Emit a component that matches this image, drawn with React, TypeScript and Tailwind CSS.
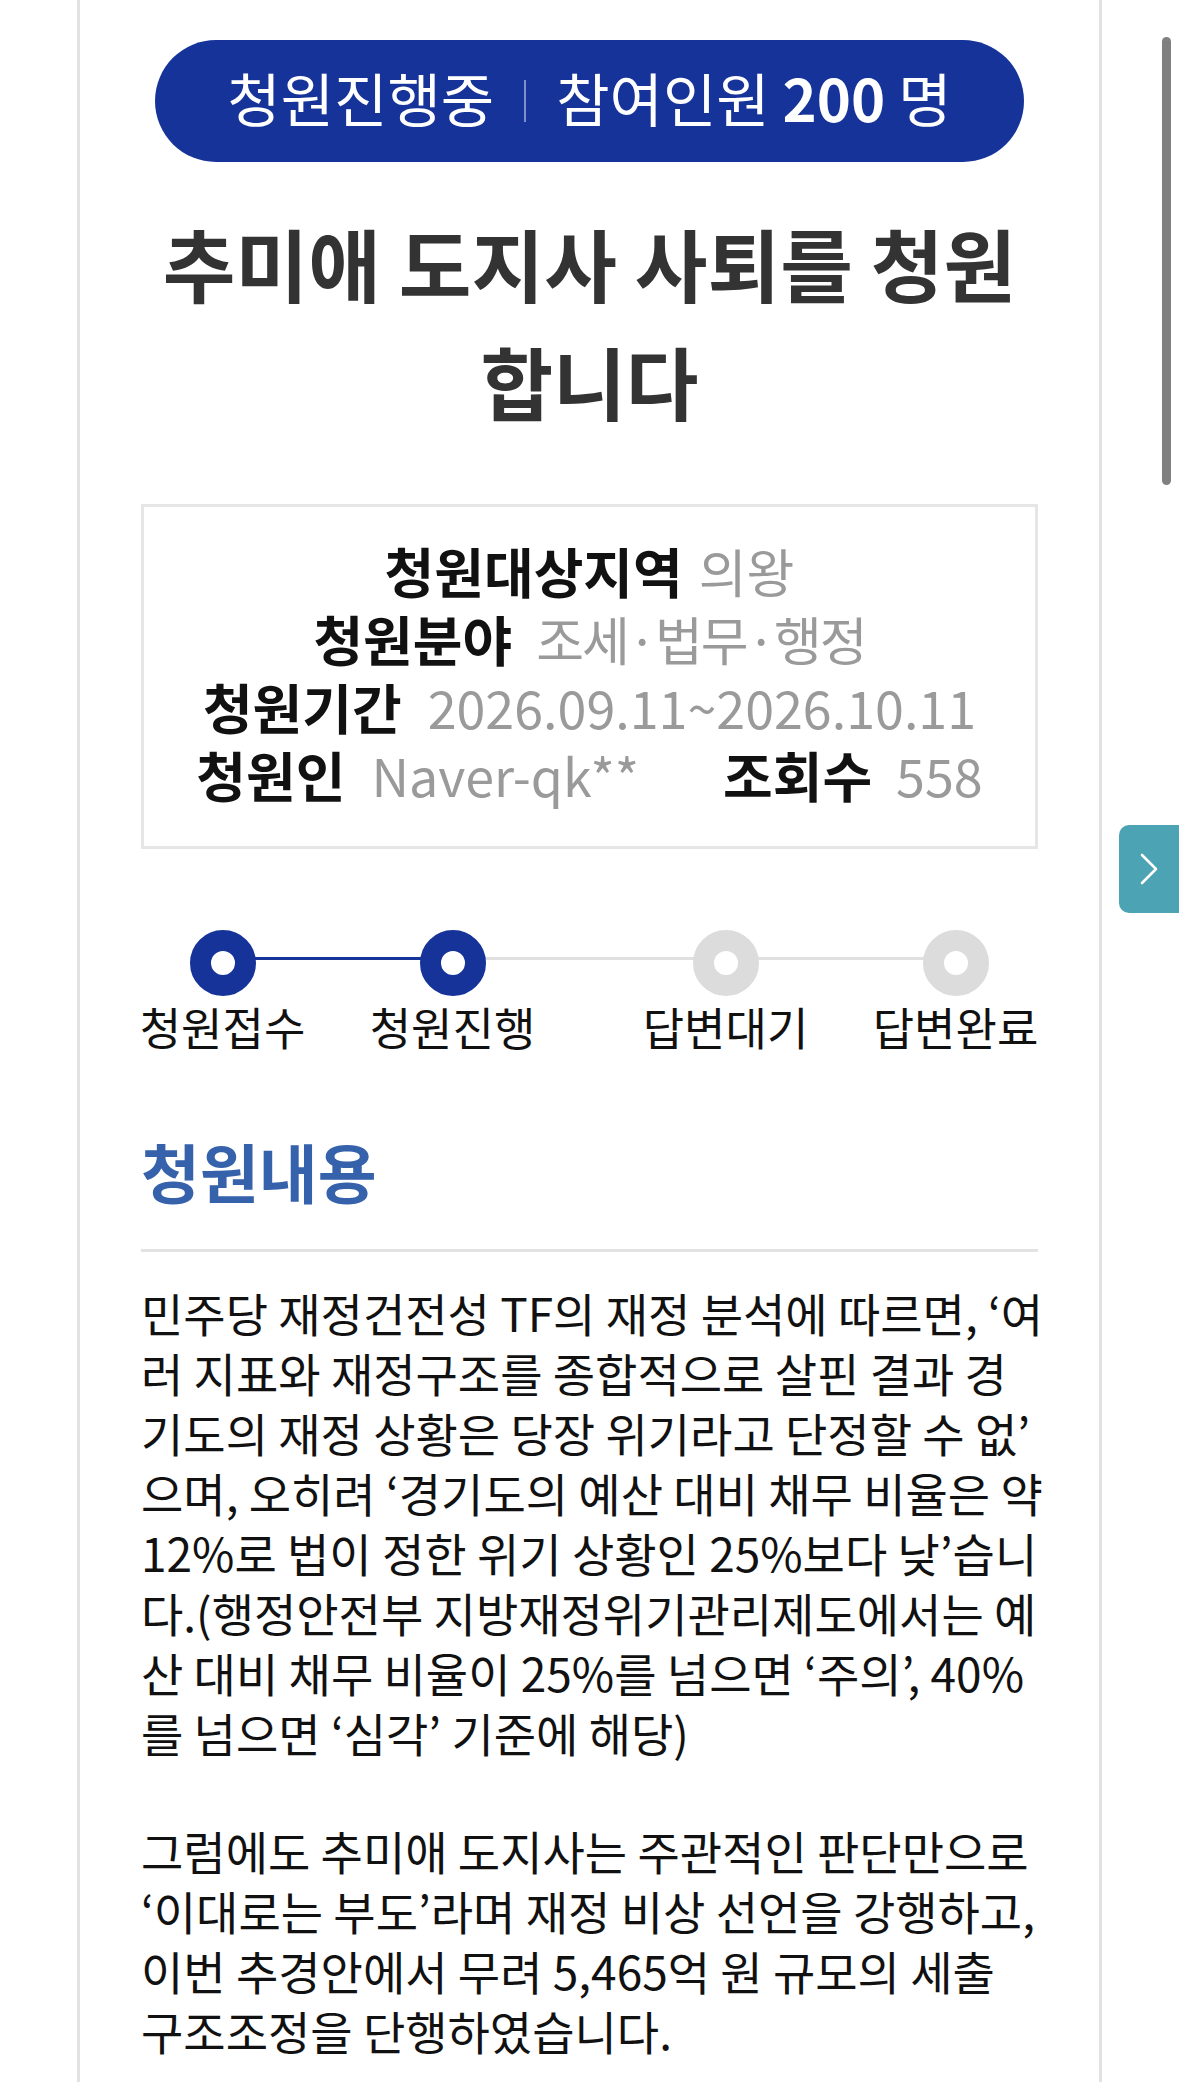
const steps = [
  { label: "청원접수", done: true, gap: "" },
  { label: "청원진행", done: true, gap: "ml-[67px]" },
  { label: "답변대기", done: false, gap: "ml-[110px]" },
  { label: "답변완료", done: false, gap: "ml-[67px]" },
]

const para1 = [
  "민주당 재정건전성 TF의 재정 분석에 따르면, ‘여",
  "러 지표와 재정구조를 종합적으로 살핀 결과 경",
  "기도의 재정 상황은 당장 위기라고 단정할 수 없’",
  "으며, 오히려 ‘경기도의 예산 대비 채무 비율은 약",
  "12%로 법이 정한 위기 상황인 25%보다 낮’습니",
  "다.(행정안전부 지방재정위기관리제도에서는 예",
  "산 대비 채무 비율이 25%를 넘으면 ‘주의’, 40%",
  "를 넘으면 ‘심각’ 기준에 해당)",
]

const para2 = [
  "그럼에도 추미애 도지사는 주관적인 판단만으로",
  "‘이대로는 부도’라며 재정 비상 선언을 강행하고,",
  "이번 추경안에서 무려 5,465억 원 규모의 세출",
  "구조조정을 단행하였습니다.",
]

function Step({ label, done, gap }: { label: string; done: boolean; gap: string }) {
  return (
    <div className={`flex w-[163px] shrink-0 flex-col items-center ${gap}`}>
      <div
        className={`relative z-10 h-[66px] w-[66px] rounded-full border-[21px] bg-white ${
          done ? "border-[#16339a]" : "border-[#dcdcdc]"
        }`}
      />
      <div className="mt-[2px] whitespace-nowrap text-[45px] leading-[58px] text-[#111]">{label}</div>
    </div>
  )
}

export default function App() {
  return (
    <div className="relative min-h-[2082px] overflow-hidden bg-white font-['Noto_Sans_CJK_KR','Noto_Sans',sans-serif]">
      <div className="ml-[77px] min-h-[2082px] w-[1025px] border-x-[3px] border-[#e2e2e2] px-[61px] pt-[40px]">
        {/* status pill */}
        <div className="mx-[14px] flex h-[122px] items-center justify-center rounded-full bg-[#16339a] pb-[8px] text-[58px] text-white">
          <span>청원진행중</span>
          <span className="mx-[30px] mt-[8px] h-[42px] w-[2px] bg-[#7f8fcc]" />
          <span className="whitespace-nowrap">
            참여인원 <b className="font-bold">200</b> 명
          </span>
        </div>

        <h1 className="mt-[42px] text-center text-[79px] font-bold leading-[118px] text-[#333]">
          추미애 도지사 사퇴를 청원
          <br />
          합니다
        </h1>

        {/* info box */}
        <div className="mt-[64px] flex h-[345px] flex-col items-center justify-center border-[3px] border-[#e6e6e6] pb-[8px]">
          <div className="flex h-[68px] items-center">
            <span className="text-[54px] font-bold leading-[68px] text-[#111]">청원대상지역</span>
            <span className="ml-[16px] text-[52px] leading-[68px] text-[#9a9a9a]">의왕</span>
          </div>
          <div className="flex h-[68px] items-center">
            <span className="text-[54px] font-bold leading-[68px] text-[#111]">청원분야</span>
            <span className="ml-[24px] text-[52px] leading-[68px] tracking-[-2px] text-[#9a9a9a]">조세·법무·행정</span>
          </div>
          <div className="flex h-[68px] items-center">
            <span className="text-[54px] font-bold leading-[68px] text-[#111]">청원기간</span>
            <span className="ml-[26px] text-[52px] leading-[68px] text-[#9a9a9a]">2026.09.11~2026.10.11</span>
          </div>
          <div className="flex h-[68px] items-center">
            <span className="text-[54px] font-bold leading-[68px] text-[#111]">청원인</span>
            <span className="ml-[26px] text-[52px] leading-[68px] text-[#9a9a9a]">Naver-qk**</span>
            <span className="ml-[84px] text-[54px] font-bold leading-[68px] text-[#111]">조회수</span>
            <span className="ml-[24px] text-[52px] leading-[68px] text-[#9a9a9a]">558</span>
          </div>
        </div>

        {/* progress */}
        <div className="relative mt-[81px] flex">
          <div className="absolute left-[82px] top-[27px] h-[3px] w-[230px] bg-[#16339a]" />
          <div className="absolute left-[312px] top-[27px] h-[3px] w-[503px] bg-[#e0e0e0]" />
          {steps.map((s) => (
            <Step key={s.label} {...s} />
          ))}
        </div>

        <h2 className="mt-[74px] text-[64px] font-bold leading-[80px] text-[#3662ab]">청원내용</h2>
        <div className="mt-[39px] h-[3px] bg-[#e3e3e3]" />

        <div className="mt-[30px] text-[46px] leading-[60px] text-[#111]">
          {para1.map((l, i) => (
            <div key={i} className="whitespace-nowrap">{l}</div>
          ))}
          <div className="h-[58px]" />
          {para2.map((l, i) => (
            <div key={i} className="whitespace-nowrap">{l}</div>
          ))}
        </div>
      </div>

      {/* scrollbar */}
      <div className="absolute left-[1162px] top-[37px] h-[448px] w-[9px] rounded-full bg-[#808080]" />

      {/* side tab */}
      <div className="absolute right-0 top-[825px] flex h-[88px] w-[60px] items-center justify-center rounded-l-[10px] bg-[#4ba3b4]">
        <svg width="20" height="32" viewBox="0 0 20 32" fill="none">
          <polyline points="3,2 17,16 3,30" stroke="white" strokeWidth="2.6" strokeLinecap="round" strokeLinejoin="round" />
        </svg>
      </div>
    </div>
  )
}
